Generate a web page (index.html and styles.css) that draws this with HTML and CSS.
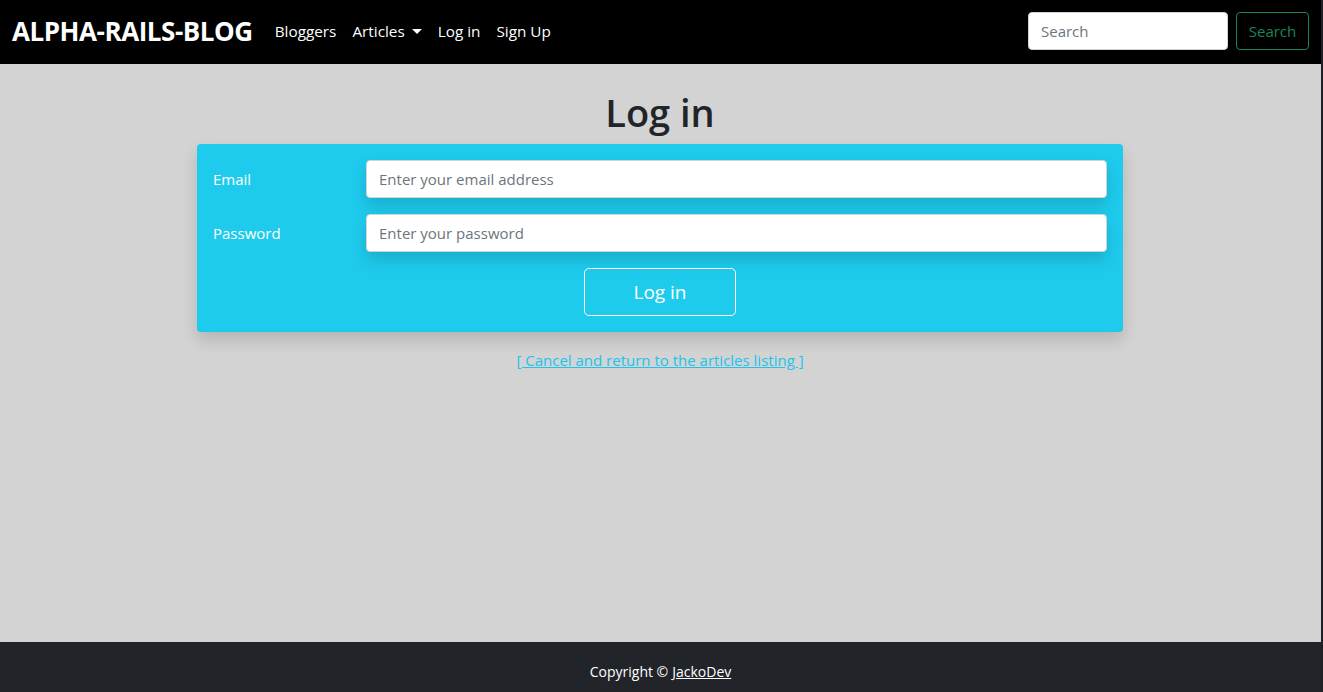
FILE: index.html
```html
<!DOCTYPE html>
<html lang="en">
<head>
<meta charset="utf-8">
<title>Log in | Alpha Rails Blog</title>
<link rel="stylesheet" href="styles.css">
</head>
<body>
<div class="page">
  <nav class="navbar">
    <a class="brand" href="#">ALPHA-RAILS-BLOG</a>
    <ul class="nav-links">
      <li><a href="#">Bloggers</a></li>
      <li><a href="#" class="dropdown">Articles <span class="caret"></span></a></li>
      <li><a href="#">Log in</a></li>
      <li><a href="#">Sign Up</a></li>
    </ul>
    <form class="search">
      <input class="search-input" type="search" placeholder="Search">
      <button class="search-btn" type="button">Search</button>
    </form>
  </nav>

  <main class="main">
    <h1 class="title">Log in</h1>
    <div class="card">
      <div class="row">
        <label class="label">Email</label>
        <input class="field" type="email" placeholder="Enter your email address">
      </div>
      <div class="row">
        <label class="label">Password</label>
        <input class="field" type="password" placeholder="Enter your password">
      </div>
      <div class="actions">
        <button class="submit" type="button">Log in</button>
      </div>
    </div>
    <p class="cancel"><a href="#">[ Cancel and return to the articles listing ]</a></p>
  </main>

  <footer class="footer">
    Copyright &copy; <a href="#">JackoDev</a>
  </footer>
</div>
</body>
</html>
```
FILE: styles.css
```css
* { box-sizing: border-box; }
html, body { margin: 0; padding: 0; height: 100%; }
body {
  background: #1f1f28;
  font-family: "Open Sans", "Noto Sans", sans-serif;
  font-size: 16px;
  color: #212529;
}
.page {
  width: 1321px;
  height: 692px;
  background: #d3d3d3;
  display: flex;
  flex-direction: column;
}
.navbar {
  background: #000;
  height: 64px;
  display: flex;
  align-items: center;
  padding: 0 12px 2px;
}
.brand {
  color: #fff;
  font-weight: 700;
  font-size: 26px;
  text-decoration: none;
  margin-right: 14px;
  letter-spacing: -0.45px;
}
.nav-links {
  list-style: none;
  display: flex;
  margin: 0;
  padding: 0;
  flex: 1;
}
.nav-links a {
  color: #fff;
  text-decoration: none;
  font-size: 15.3px;
  padding: 8px 8px;
  display: flex;
  align-items: center;
}
.caret {
  display: inline-block;
  width: 0; height: 0;
  margin-left: 7px;
  border-top: 5px solid #fff;
  border-left: 5px solid transparent;
  border-right: 5px solid transparent;
}
.search { display: flex; gap: 8px; }
.search-input {
  width: 200px;
  height: 38px;
  border: 1px solid #ced4da;
  border-radius: 4px;
  padding: 6px 12px;
  font: inherit;
  font-size: 15px;
}
.search-input::placeholder { color: #6c757d; }
.search-btn {
  height: 38px;
  width: 73px;
  background: transparent;
  border: 1px solid #198754;
  border-radius: 4px;
  color: #198754;
  font: inherit;
  font-size: 15px;
}
.main {
  flex: 1;
  display: flex;
  flex-direction: column;
  align-items: center;
  padding: 24px 1px 0 0;
}
.title {
  margin: 0 0 8px;
  font-size: 38px;
  font-weight: 600;
  line-height: 48px;
  color: #212529;
}
.card {
  width: 926px;
  background: #1ecbed;
  border-radius: 4px;
  padding: 16px;
  box-shadow: 0 8px 16px rgba(0,0,0,0.15);
  display: flex;
  flex-direction: column;
  gap: 16px;
}
.row {
  display: grid;
  grid-template-columns: 153px 1fr;
  align-items: center;
}
.label { color: #fff; font-size: 15px; }
.field {
  height: 38px;
  border: 1px solid #ced4da;
  border-radius: 4px;
  padding: 6px 12px;
  font: inherit;
  font-size: 15px;
  box-shadow: 0 8px 16px rgba(0,0,0,0.15);
}
.field::placeholder { color: #6c757d; }
.actions { display: flex; justify-content: center; }
.submit {
  width: 152px;
  height: 48px;
  background: transparent;
  border: 1px solid #fff;
  border-radius: 5px;
  color: #fff;
  font: inherit;
  font-size: 19px;
}
.cancel { margin: 18px 0 0; font-size: 15px; }
.cancel a { color: #20c4ea; }
.footer {
  height: 50px;
  background: #212529;
  color: #fff;
  font-size: 14px;
  display: flex;
  align-items: center;
  justify-content: center;
  padding-top: 8px;
}
.footer a { color: #fff; margin-left: 4px; }
```
